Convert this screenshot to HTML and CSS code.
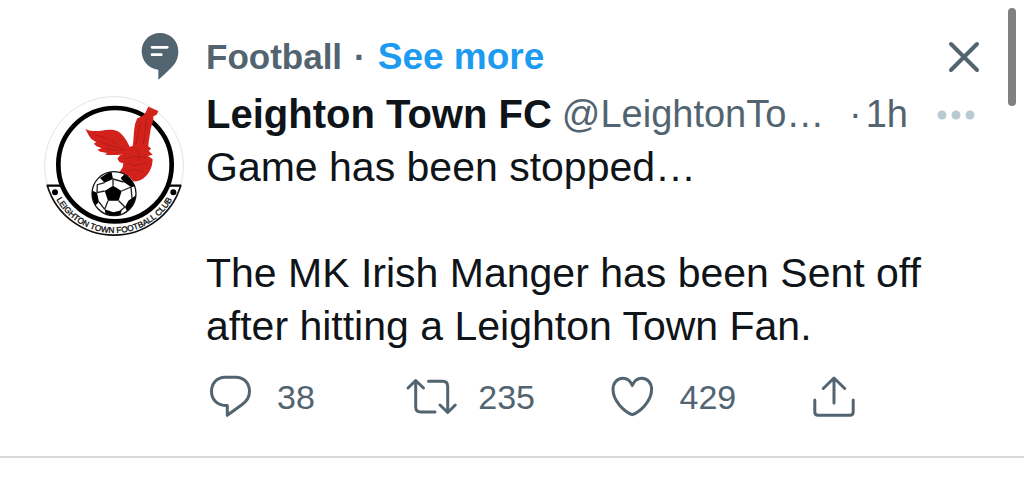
FILE: index.html
```html
<!DOCTYPE html>
<html lang="en">
<head>
	<meta charset="UTF-8">
	<meta name="viewport" content="width=device-width, initial-scale=1">
	<title>Leighton Town FC</title>
	<link rel="stylesheet" href="styles.css">
</head>
<body>
	<article class="tweet">
		<div class="topic-icon">
			<svg viewBox="33 38 114 141" aria-hidden="true">
				<path class="fill" d="M90 38C59 38 35 62 35 93C35 122 56 146 85 148V178C97 168 112 155 126 140C139 127 145 112 145 93C145 62 121 38 90 38Z"/>
				<path class="topic-lines" d="M66 81H112M66 103H94"/>
			</svg>
		</div>
		<header class="topic">
			<span>Football</span>
			<span class="dot">·</span>
			<a href="#">See more</a>
			<button class="close" type="button" aria-label="Close">
				<svg viewBox="0 0 32 32"><path d="M3 3L29 29M29 3L3 29"/></svg>
			</button>
		</header>

		<!-- Club badge -->
		<a class="avatar" href="#" aria-label="Leighton Town FC">
			<svg viewBox="30 30 420 420">
				<defs>
					<path id="badge-arc" d="M40 240A201 201 0 0 0 442 240"/>
					<clipPath id="ball"><circle cx="240" cy="323" r="66"/></clipPath>
				</defs>
				<circle cx="240" cy="240" r="208" fill="#fff" stroke="#e4e4e4" stroke-width="3"/>
				<path d="M38 299H82M398 299H442" stroke="#000" stroke-width="7"/>
				<path d="M40 299A209 209 0 0 0 440 299" fill="none" stroke="#111" stroke-width="5"/>
				<circle cx="243" cy="236" r="170" fill="#fff" stroke="#000" stroke-width="14"/>
				<circle cx="63" cy="319" r="9"/>
				<circle cx="418" cy="319" r="9"/>
				<text class="badge-text"><textPath href="#badge-arc" startOffset="50%">LEIGHTON TOWN FOOTBALL CLUB</textPath></text>
				<path fill="#d3221c" d="M154 128C169 137 184 136 202 134C219 131 237 130 251 136C268 146 276 160 287 182L296 180C300 160 298 136 303 115L309 98C318 92 330 90 334 80L343 62L373 75L368 86L358 91C360 104 353 116 350 129C348 147 344 162 343 181L352 188L344 194L356 206L342 210L356 220C355 240 350 256 336 270C326 282 310 288 298 286L285 271L262 270L257 258L266 244L268 232L257 229L250 218L258 208L278 203C260 207 244 208 230 207L213 206L219 201L199 197L190 191L203 187L188 181L179 173L187 169L172 159L164 148Z"/>
				<path fill="none" stroke="#b41c17" stroke-width="3" d="M183 147L222 158L253 176M199 168L228 178L263 187M214 187L246 192L276 191M319 105L313 139L306 174M337 96L334 137L328 174M268 219L300 210L338 215M281 231L302 239L336 231M277 257L299 251L328 258M301 185L316 199L312 221"/>
				<circle cx="240" cy="323" r="66" fill="#fff"/>
				<g clip-path="url(#ball)">
					<path d="M237 299L263 315L254 344H222L212 315ZM198 276L232 254L237 279L212 290ZM260 276L276 260L312 301L291 303L269 288ZM171 312L189 320L195 348L180 362L162 340ZM283 344L306 328L312 362L281 380L273 363ZM212 370L238 379L263 373L258 393H216Z"/>
					<path d="M237 299V279L269 288M263 315L291 303M254 344L273 363M222 344L212 370M212 315L189 320M212 290L190 296L189 320M291 303L294 338M273 363L258 375M195 348L212 370" fill="none" stroke="#222" stroke-width="4"/>
				</g>
				<circle cx="240" cy="323" r="66" fill="none" stroke="#111" stroke-width="4"/>
			</svg>
		</a>

		<div class="content">
			<div class="author">
				<strong class="name">Leighton Town FC</strong>
				<span class="handle">@LeightonTo…</span>
				<span class="time"><span>·</span><time>1h</time></span>
				<button class="more" type="button" aria-label="More">
					<svg viewBox="0 0 44 12"><circle cx="6" cy="6" r="4.5"/><circle cx="20" cy="6" r="4.5"/><circle cx="34" cy="6" r="4.5"/></svg>
				</button>
			</div>
			<p class="text">Game has been stopped…</p>
			<p class="text">The MK Irish Manger has been Sent off after hitting a Leighton Town Fan.</p>
			<div class="actions">
				<button type="button" aria-label="Reply">
					<svg viewBox="0 0 48 44"><path d="M19 2.2H30C38 2.2 43.5 8.5 43.5 16.5C43.5 22 40.5 26.5 35.5 30L21.3 40.3V30.5C12 30.8 5.5 25 5.5 16.5C5.5 8.5 11 2.2 19 2.2Z"/></svg>
					<span>38</span>
				</button>
				<button type="button" aria-label="Retweet">
					<svg viewBox="0 0 48 44"><path d="M1 13L8.7 5.5L16.5 13M8.7 6V32Q8.7 37 13.7 37H28M21.5 6.3H35.7Q40.7 6.3 40.7 11.3V37M33 30L40.7 37.5L48.3 30"/></svg>
					<span>235</span>
				</button>
				<button type="button" aria-label="Like">
					<svg viewBox="0 0 48 44"><path d="M24.3 10.5C22.5 6 19 3.3 14.8 3.3C9 3.3 5 8 5 14.3C5 26 16 36.5 24.3 39.7C32.6 36.5 43.6 26 43.6 14.3C43.6 8 39.6 3.3 33.8 3.3C29.6 3.3 26.1 6 24.3 10.5Z"/></svg>
					<span>429</span>
				</button>
				<button type="button" aria-label="Share">
					<svg viewBox="0 0 48 44"><path d="M4.8 25V37Q4.8 40.3 8.1 40.3H39.9Q43.2 40.3 43.2 37V25M13.3 13.5L24 3L34.7 13.5M24 3.5V28"/></svg>
				</button>
			</div>
		</div>
	</article>
	<div class="scroll-thumb"></div>
</body>
</html>
```
FILE: styles.css
```css
body {
	margin: 0;
	background-color: #fff;
	color: #0f1419;
	font-family: "Liberation Sans", Arial, sans-serif;
}
a {
	text-decoration: none;
}
button {
	display: flex;
	align-items: center;
	padding: 0;
	border: 0;
	background: none;
	color: inherit;
	font: inherit;
	cursor: pointer;
}
svg {
	display: block;
	overflow: visible;
}
.tweet {
	display: grid;
	grid-template-columns: 140px 1fr;
	column-gap: 22px;
	padding: 33px 44px 37px;
	border-bottom: 2px solid #d9d9d9;
}
.topic-icon {
	justify-self: end;
	padding-right: 5px;
}
.topic-icon svg {
	width: 38px;
	height: 47px;
}
.fill {
	fill: #536471;
}
.topic-lines {
	stroke: #fff;
	stroke-width: 8;
	stroke-linecap: round;
}
.topic {
	display: flex;
	align-items: center;
	height: 47px;
	color: #536471;
	font-size: 35px;
	font-weight: bold;
}
.topic .dot {
	margin: 0 12px;
}
.topic a {
	color: #1d9bf0;
	font-size: 37px;
}
.close {
	margin-left: auto;
}
.close svg {
	width: 32px;
	height: 32px;
	stroke: #536471;
	stroke-width: 4;
	stroke-linecap: round;
}
.avatar {
	margin-top: 16px;
}
.avatar svg {
	width: 140px;
	height: 140px;
}
.badge-text {
	fill: #111;
	stroke: #111;
	stroke-width: 1;
	font-size: 25px;
	text-anchor: middle;
}
.content {
	padding-top: 8px;
	font-size: 41px;
	line-height: 53px;
}
.author {
	display: flex;
	align-items: center;
	color: #536471;
	font-size: 38px;
	white-space: nowrap;
}
.name {
	margin-right: 10px;
	color: #0f1419;
	font-size: 40px;
}
.time {
	display: flex;
	gap: 4px;
	margin-left: auto;
}
.more {
	margin-left: 28px;
}
.more svg {
	width: 44px;
	height: 12px;
	fill: #b9cad3;
}
.text {
	margin: 0;
}
.text + .text {
	margin-top: 53px;
}
.actions {
	display: grid;
	grid-template-columns: repeat(3, 26%) auto;
	margin-top: 22px;
	color: #536471;
	font-size: 34px;
	line-height: 44px;
}
.actions button {
	gap: 23px;
}
.actions svg {
	width: 48px;
	height: 44px;
	fill: none;
	stroke: #536471;
	stroke-width: 3;
	stroke-linecap: round;
	stroke-linejoin: round;
}
/* Scroll position marker at the window edge */
.scroll-thumb {
	position: absolute;
	top: 8px;
	right: 8px;
	width: 8px;
	height: 98px;
	border-radius: 4px;
	background-color: #808080;
}
```
